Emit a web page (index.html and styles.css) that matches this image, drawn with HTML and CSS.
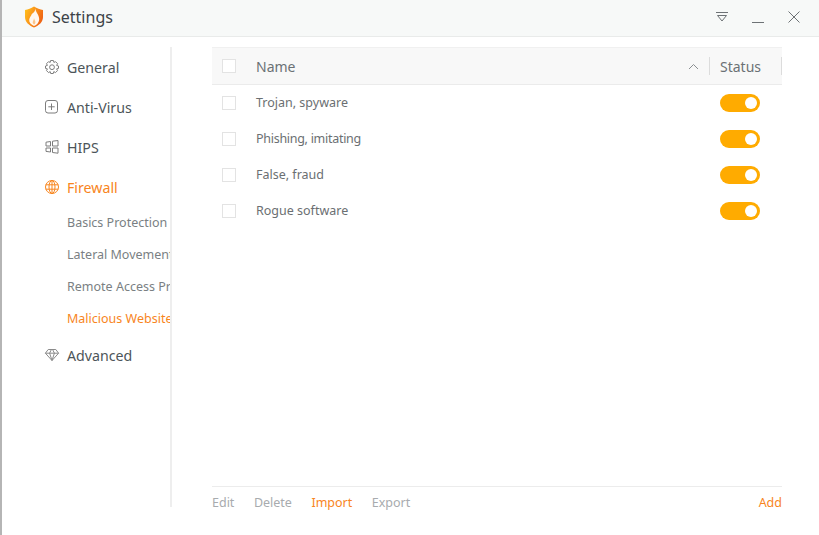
FILE: index.html
```html
<!DOCTYPE html>
<html lang="en">
<head>
<meta charset="utf-8">
<title>Settings</title>
<link rel="stylesheet" href="styles.css">
</head>
<body>
<div class="window">
  <header class="titlebar">
    <div class="brand">
      <svg class="logo" width="20" height="22" viewBox="0 0 20 22">
        <defs>
          <linearGradient id="sh" x1="0" y1="0" x2="1" y2="0.5">
            <stop offset="0" stop-color="#ffc61c"/>
            <stop offset="0.45" stop-color="#fb9a1a"/>
            <stop offset="1" stop-color="#ef6414"/>
          </linearGradient>
        </defs>
        <path d="M1 4 C4 3.5 7 2.5 10 0.5 C13 2.5 16 3.5 19 4 L19 11 C19 16 15 19.5 10 21.5 C5 19.5 1 16 1 11 Z" fill="url(#sh)"/>
        <path d="M11.5 2.5 C11.5 6.5 15.5 9 15.2 13.5 C15 16.5 13 18.8 10 20 C7 18.8 5 16.5 5.2 13.8 C5.4 11.2 7.2 10.5 7.8 8 C9.5 7 11.2 5.2 11.5 2.5 Z" fill="#fff8f0"/>
        <path d="M10 12 C10.3 14 11.6 14.8 11.4 16.4 C11.3 17.4 10.7 18 10 18.4 C9.2 18 8.6 17.2 8.7 16.2 C8.9 14.8 9.9 14 10 12 Z" fill="#fdc58a"/>
      </svg>
      <span class="title">Settings</span>
    </div>
    <div class="controls">
      <svg width="14" height="12" viewBox="0 0 14 12"><path d="M1 1.5H13M2.5 4.5H11.5L7 10Z" fill="none" stroke="#6d7275" stroke-width="1"/></svg>
      <svg width="14" height="14" viewBox="0 0 14 14"><path d="M1 12.5H13" stroke="#6d7275" stroke-width="1"/></svg>
      <svg width="14" height="14" viewBox="0 0 14 14"><path d="M1.5 1.5L12.5 12.5M12.5 1.5L1.5 12.5" stroke="#6d7275" stroke-width="1"/></svg>
    </div>
  </header>
  <div class="body">
    <nav class="sidebar">
      <a class="nav-item">
        <svg class="nav-icon" width="16" height="16" viewBox="0 0 16 16" fill="none" stroke="#7d7d7d"><path d="M6.6 1.5H9.4L9.9 3.4L11.6 2.7L13.6 4.7L12.6 6.4L14.5 7V9.4L12.6 9.9L13.5 11.6L11.5 13.6L9.8 12.6L9.3 14.5H6.7L6.2 12.6L4.5 13.6L2.5 11.6L3.4 9.9L1.5 9.4V7L3.4 6.4L2.5 4.7L4.5 2.7L6.2 3.4Z"/><circle cx="8" cy="8.2" r="2.4"/></svg>
        General
      </a>
      <a class="nav-item">
        <svg class="nav-icon" width="16" height="16" viewBox="0 0 16 16" fill="none" stroke="#7d7d7d"><rect x="1.5" y="1.5" width="12" height="12.5" rx="2.5"/><path d="M7.5 4.5V11M4.3 7.8H10.7"/></svg>
        Anti-Virus
      </a>
      <a class="nav-item">
        <svg class="nav-icon" width="16" height="16" viewBox="0 0 16 16" fill="none" stroke="#7d7d7d"><path d="M2 3.2L6.5 2.5V7H2ZM8.5 2.2L14 1.5V7H8.5ZM2 9H6.5V13L2 12.4ZM8.5 9H14V14.2L8.5 13.5Z"/></svg>
        HIPS
      </a>
      <a class="nav-item active">
        <svg class="nav-icon" width="16" height="16" viewBox="0 0 16 16" fill="none" stroke="#f8851d"><circle cx="8" cy="8" r="6.5"/><ellipse cx="8" cy="8" rx="3" ry="6.5"/><path d="M1.8 5.8H14.2M1.8 10.2H14.2M8 1.5V14.5"/></svg>
        Firewall
      </a>
      <a class="sub-item">Basics Protection</a>
      <a class="sub-item">Lateral Movement Protection</a>
      <a class="sub-item">Remote Access Protection</a>
      <a class="sub-item active">Malicious Website Protection</a>
      <a class="nav-item">
        <svg class="nav-icon" width="16" height="16" viewBox="0 0 16 16" fill="none" stroke="#8a8a8a"><path d="M4.2 2.5H11.8L14.6 6.2L8 13.5L1.4 6.2ZM1.4 6.2H14.6M5.6 6.2L8 13.5L10.4 6.2L8.6 2.5M5.6 6.2L7.4 2.5"/></svg>
        Advanced
      </a>
    </nav>
    <main class="content">
      <div class="table">
        <div class="thead">
          <span class="check"></span>
          <span class="th-name">Name</span>
          <svg class="sort" width="11" height="7" viewBox="0 0 11 7"><path d="M1 6L5.5 1.5L10 6" fill="none" stroke="#8b8f92" stroke-width="1"/></svg>
          <span class="th-status">Status</span>
        </div>
        <div class="row"><span class="check"></span><span class="name">Trojan, spyware</span><span class="toggle"></span></div>
        <div class="row"><span class="check"></span><span class="name tight">Phishing, imitating</span><span class="toggle"></span></div>
        <div class="row"><span class="check"></span><span class="name">False, fraud</span><span class="toggle"></span></div>
        <div class="row"><span class="check"></span><span class="name">Rogue software</span><span class="toggle"></span></div>
      </div>
      <footer class="actions">
        <a class="action">Edit</a>
        <a class="action">Delete</a>
        <a class="action on">Import</a>
        <a class="action">Export</a>
        <a class="action on add">Add</a>
      </footer>
    </main>
  </div>
</div>
</body>
</html>
```

FILE: styles.css
```css
* { box-sizing: border-box; }
html, body { margin: 0; height: 100%; }
body { background: #fff; overflow: hidden; font-family: "Noto Sans", "Open Sans", sans-serif; }
.window {
  width: 819px; height: 535px;
  border-left: 2px solid #b5b5b5;
  background: #fff;
  display: flex; flex-direction: column;
}
.titlebar {
  height: 37px; flex: none;
  background: #f7f9f8;
  border-bottom: 1px solid #e9ebea;
  display: flex; align-items: center; justify-content: space-between;
  padding: 0 18px 2px 22px;
}
.brand { display: flex; align-items: center; gap: 8px; }
.logo { display: block; }
.title { font-size: 16px; line-height: 22px; color: #3c4348; }
.controls { display: flex; align-items: center; gap: 22px; }
.controls svg { display: block; }
.body { flex: 1; display: flex; padding: 10px 0 17px; min-height: 0; }
.sidebar {
  width: 170px; flex: none;
  margin-bottom: 11px;
  border-right: 2px solid #eeeeee;
  overflow: hidden;
  display: flex; flex-direction: column;
}
.nav-item {
  height: 40px; flex: none;
  display: flex; align-items: center;
  padding-left: 42px;
  font-size: 14.2px; color: #4d5559;
  white-space: nowrap;
}
.nav-icon { flex: none; margin-right: 7px; }
.nav-item.active { color: #f8851d; }
.sub-item {
  height: 32px; flex: none;
  display: flex; align-items: center;
  padding: 0 0 2px 65px;
  font-size: 12.5px; color: #7a7f83;
  white-space: nowrap;
}
.sub-item.active { color: #f8851d; }
.content {
  margin-left: 40px;
  width: 570px;
  display: flex; flex-direction: column; justify-content: space-between;
}
.thead {
  height: 38px;
  background: #f8f8f8;
  border-top: 1px solid #f0f0f0;
  border-bottom: 1px solid #ebebeb;
  display: flex; align-items: center;
  padding-left: 10px;
}
.check {
  width: 14px; height: 14px; flex: none;
  border: 1px solid #e3e3e3;
  background: #fff;
}
.th-name { margin-left: 20px; font-size: 14px; color: #6b7175; flex: 1; }
.sort { margin-right: 10px; display: block; }
.th-status {
  width: 73px; height: 18px;
  border-left: 1px solid #dcdcdc;
  border-right: 1px solid #dcdcdc;
  padding-left: 10px;
  font-size: 14px; line-height: 19px; color: #6b7175;
}
.row {
  height: 36px;
  display: flex; align-items: center;
  padding-left: 10px; padding-right: 22px;
}
.name { margin-left: 20px; padding-bottom: 2px; font-size: 12.5px; color: #6b6f72; flex: 1; }
.tight { letter-spacing: -0.28px; }
.toggle {
  width: 40px; height: 18px;
  border-radius: 9px;
  background: #ffab00;
  position: relative;
}
.toggle::after {
  content: ""; position: absolute;
  right: 3px; top: 3px;
  width: 12px; height: 12px;
  border-radius: 50%; background: #fff;
}
.actions {
  border-top: 1px solid #ececec;
  height: 32px;
  display: flex; align-items: center; gap: 19.5px;
}
.action { font-size: 12.5px; color: #a8abae; }
.action.on { color: #f8851d; }
.add { margin-left: auto; }
```
